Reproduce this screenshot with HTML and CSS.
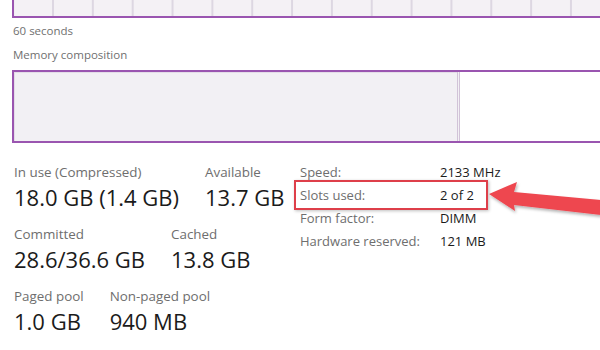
FILE: index.html
```html
<!DOCTYPE html>
<html lang="en">
<head>
    <meta charset="UTF-8">
    <title>Memory</title>
    <link rel="stylesheet" href="styles.css">
</head>
<body>
    <div class="usage-graph"></div>
    <div class="caption">60 seconds</div>
    <div class="caption caption-title">Memory composition</div>
    <div class="composition">
        <div class="composition-used"></div>
        <div class="composition-free"></div>
    </div>

    <div class="details">
        <div class="counters">
            <div class="counter-row">
                <div class="counter">
                    <div class="counter-label">In use (Compressed)</div>
                    <div class="counter-value">18.0 GB (1.4 GB)</div>
                </div>
                <div class="counter">
                    <div class="counter-label">Available</div>
                    <div class="counter-value">13.7 GB</div>
                </div>
            </div>
            <div class="counter-row">
                <div class="counter">
                    <div class="counter-label">Committed</div>
                    <div class="counter-value">28.6/36.6 GB</div>
                </div>
                <div class="counter">
                    <div class="counter-label">Cached</div>
                    <div class="counter-value">13.8 GB</div>
                </div>
            </div>
            <div class="counter-row">
                <div class="counter">
                    <div class="counter-label">Paged pool</div>
                    <div class="counter-value">1.0 GB</div>
                </div>
                <div class="counter">
                    <div class="counter-label">Non-paged pool</div>
                    <div class="counter-value">940 MB</div>
                </div>
            </div>
        </div>

        <div class="hardware">
            <div class="hw-row"><span class="hw-label">Speed:</span><span class="hw-value">2133 MHz</span></div>
            <div class="hw-row hw-marked"><span class="hw-label">Slots used:</span><span class="hw-value">2 of 2</span></div>
            <div class="hw-row"><span class="hw-label">Form factor:</span><span class="hw-value">DIMM</span></div>
            <div class="hw-row"><span class="hw-label">Hardware reserved:</span><span class="hw-value">121 MB</span></div>
        </div>
    </div>

    <svg class="arrow" width="120" height="50" viewBox="0 0 120 50">
        <defs>
            <filter id="arrowShadow" x="-20%" y="-40%" width="140%" height="180%">
                <feDropShadow dx="1" dy="2" stdDeviation="1.5" flood-color="#000" flood-opacity="0.3"/>
            </filter>
        </defs>
        <polygon filter="url(#arrowShadow)" fill="#ee4650"
            points="8,20 36,8 33,18 120,26 120,41 33,31 34,37"/>
    </svg>
</body>
</html>
```

FILE: styles.css
```css
body {
    margin: 0;
    width: 600px;
    height: 350px;
    overflow: hidden;
    position: relative;
    background-color: #ffffff;
    font-family: 'Open Sans', 'Noto Sans', Arial, sans-serif;
}

.usage-graph {
    margin-left: 12px;
    height: 16px;
    border-left: 2px solid #9a55b0;
    border-bottom: 2px solid #9a55b0;
    background-color: #f4f1f5;
    background-image: linear-gradient(to right, #ddd7e2 2px, transparent 2px);
    background-size: 39.85px 100%;
    background-position: 38px 0;
}

.caption {
    margin: 5px 0 0 13px;
    font-size: 11.5px;
    line-height: 16px;
    color: #707070;
}

.caption-title {
    margin-top: 8px;
}

.composition {
    display: flex;
    margin: 7px 0 0 12px;
    height: 69px;
    border: 2px solid #9a55b0;
    border-right: none;
}

.composition-used {
    width: 443px;
    background-color: #f2f0f4;
    border-right: 3px double #d2c3d8;
    box-shadow: inset 1px 1px 0 #e4dde8;
}

.composition-free {
    flex: 1;
    background-color: #ffffff;
}

.details {
    display: flex;
    margin-top: 20px;
    padding-left: 14px;
}

.counters {
    width: 286px;
}

.counter-row {
    display: flex;
    gap: 26px;
    margin-bottom: 12px;
}

.counter-label {
    font-size: 13.4px;
    line-height: 18px;
    color: #6e6e6e;
}

.counter-value {
    font-size: 22px;
    line-height: 32px;
    color: #1b1b1b;
}

.hardware {
    font-size: 13px;
    color: #6e6e6e;
}

.hw-row {
    display: flex;
    height: 23px;
    line-height: 18px;
}

.hw-label {
    width: 140px;
}

.hw-value {
    color: #1b1b1b;
}

.hw-marked {
    position: relative;
}

.hw-marked::after {
    content: '';
    position: absolute;
    left: -6px;
    top: -6px;
    width: 190px;
    height: 26px;
    border: 2px solid #de3f4a;
    box-shadow: 1px 1px 3px rgba(0, 0, 0, 0.25);
}

.arrow {
    position: absolute;
    left: 481px;
    top: 174px;
}
```
